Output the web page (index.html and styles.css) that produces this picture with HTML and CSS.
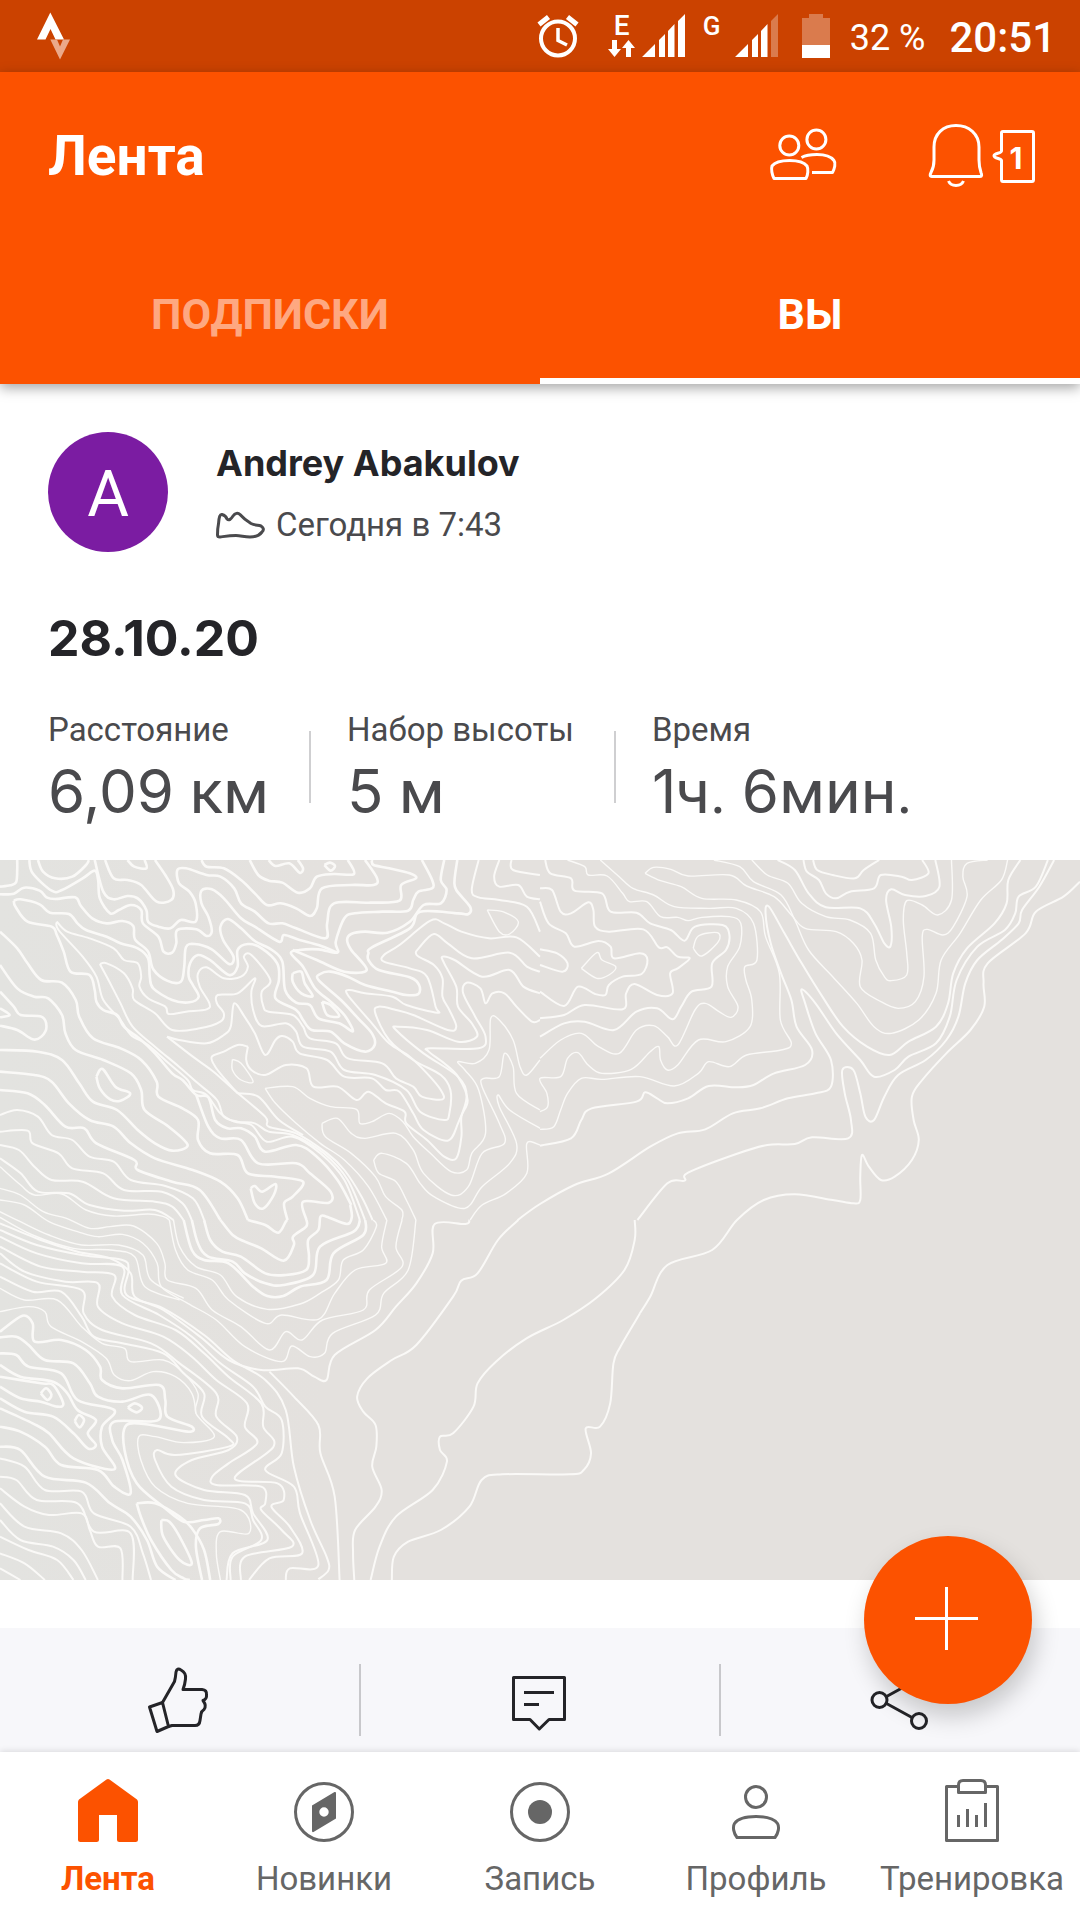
FILE: index.html
```html
<!DOCTYPE html>
<html lang="ru">
<head>
  <meta charset="UTF-8">
  <meta name="viewport" content="width=device-width, initial-scale=1">
  <title>Лента</title>
  <link rel="stylesheet" href="styles.css">
</head>
<body>

  <!-- Status bar -->
  <div class="status-bar">
    <svg class="status-logo" width="36" height="50" viewBox="36 11 36 50">
      <path fill="#fff" d="M50.300 12.500L64 39.500H55.500L50.500 29L45.500 39.500H37Z"/>
      <path fill="#eba98a" d="M50.300 39.500H57L60 46.500L63 39.500H70L60 59.500Z"/>
    </svg>
    <div class="status-icons">
      <svg class="alarm" width="44" height="48" viewBox="536 12 44 48" fill="none" stroke="#fff">
        <circle cx="558" cy="38.500" r="17" stroke-width="4"/>
        <path stroke-width="3.500" d="M558 28V40.500L567 45"/>
        <path stroke-width="5" d="M539 24.500L548.500 17M577 24.500L567.500 17"/>
      </svg>
      <div class="network">
        <div class="net-type">
          <span>E</span>
          <svg width="28" height="18" viewBox="0 0 28 18" fill="#fff">
            <path d="M4 0H9V9H13L6.500 17L0 9H4ZM18 17V8H14L20.500 0L27 8H23V17Z"/>
          </svg>
        </div>
        <svg width="43" height="44" viewBox="0 0 43 44" fill="#fff">
          <path d="M0 43L13 30V43ZM17 43V26L23 20V43ZM26 43V17L32.500 10V43ZM36 43V7L43 0V43Z"/>
        </svg>
      </div>
      <div class="network">
        <div class="net-type"><span>G</span></div>
        <svg width="43" height="44" viewBox="0 0 43 44" fill="#fff">
          <path d="M0 43L13 30V43ZM17 43V26L23 20V43ZM26 43V17L32.500 10V43Z"/>
          <path opacity=".3" d="M36 43V7L43 0V43Z"/>
        </svg>
      </div>
      <svg width="28" height="44" viewBox="0 0 28 44" fill="#fff">
        <path opacity=".3" d="M7 0H21V4H28V31H0V4H7Z"/>
        <path d="M0 31H28V44H0Z"/>
      </svg>
      <span class="battery">32 %</span>
      <span class="clock">20:51</span>
    </div>
  </div>

  <!-- Header -->
  <header class="header">
    <div class="toolbar">
      <h1>Лента</h1>
      <div class="toolbar-actions">
        <button class="icon-btn" aria-label="Друзья">
          <svg width="72" height="60" viewBox="767 126 72 60" fill="none" stroke="#fff" stroke-width="3" stroke-linejoin="round">
            <ellipse cx="789.300" cy="145.500" rx="9.500" ry="9.500"/>
            <ellipse cx="816.400" cy="139.500" rx="9.500" ry="9.500"/>
            <path d="M774 178.500C772 175 771 169 772 166C775 162 782 160.500 789.500 160.500C797 160.500 804 162 807 166C808.500 169 808 175 806 178.500Z"/>
            <path d="M801.500 157.500C806 155 811 154.500 817 154.500C824 154.500 831 156.500 834 160.500C836 163 834.500 169 832.500 172.500H812"/>
          </svg>
        </button>
        <button class="icon-btn" aria-label="Уведомления">
          <svg width="56" height="66" viewBox="928 125 56 66" fill="none" stroke="#fff" stroke-width="3" stroke-linejoin="round">
            <path d="M932 178.500C929.500 178.500 930 176.500 931 174.500C933.500 170 934 167 934 162V149C934 136 943 127.500 956 127.500C969 127.500 979 136 979 149V162C979 167 979.500 170 981 174.500C982 177 982 178.500 980 178.500Z"/>
            <path d="M948.500 183C951 189 961 189 963.500 183"/>
          </svg>
          <span class="badge">
            <svg width="44" height="56" viewBox="992 128 44 56" fill="none" stroke="#fff" stroke-width="3" stroke-linejoin="round">
              <path d="M1001.500 151V133Q1001.500 131.500 1003 131.500H1032Q1033.500 131.500 1033.500 133V179.500Q1033.500 181.500 1032 181.500H1003Q1001.500 181.500 1001.500 179.500V160.500C1001.500 158.500 994 158.500 994 155.700C994 153 1001.500 153.500 1001.500 151Z"/>
            </svg>
            <span class="badge-count">1</span>
          </span>
        </button>
      </div>
    </div>
    <nav class="tabs">
      <a class="tab" href="#following">ПОДПИСКИ</a>
      <a class="tab active" href="#you">ВЫ</a>
    </nav>
  </header>

  <!-- Feed -->
  <main class="feed">
    <article class="activity">
      <div class="athlete">
        <div class="avatar">A</div>
        <div class="athlete-info">
          <h2>Andrey Abakulov</h2>
          <p class="activity-time">
            <svg width="52" height="30" viewBox="2 0 52 30" fill="none" stroke="#4a4a4d" stroke-width="3" stroke-linejoin="round">
              <path d="M3.500 25C3.500 20 4 16 4.600 13C5 7 6 4 8 4.500C10 5 12 6 13 9C15 11 17 9 19 6C21 3 24 2.500 26 4.500C29 8 33 11 37 13.500C41 15.500 44 15 47 16C50 18 50 20 48 22C45 26 41 27 36 27C30 27 27 25.500 22 25.500C15 25.500 10 26.500 6 27Q3.500 27 3.500 25Z"/>
            </svg>
            <span>Сегодня в 7:43</span>
          </p>
        </div>
      </div>
      <h3 class="activity-title">28.10.20</h3>
      <dl class="stats">
        <div class="stat">
          <dt>Расстояние</dt>
          <dd><span class="num">6,09</span> км</dd>
        </div>
        <div class="stat">
          <dt>Набор высоты</dt>
          <dd><span class="num">5</span> м</dd>
        </div>
        <div class="stat">
          <dt>Время</dt>
          <dd><span class="num">1</span>ч. <span class="num">6</span>мин.</dd>
        </div>
      </dl>
      <svg class="map" id="map" viewBox="0 0 1080 720" preserveAspectRatio="xMidYMid slice"></svg>
      <div class="actions">
        <button class="action" aria-label="Нравится">
          <svg width="72" height="72" viewBox="0 0 72 72" fill="none" stroke="#242428" stroke-width="3" stroke-linejoin="round">
            <path d="M6.500 43L19.500 38.500L25.500 62.500L14 67.500Z"/>
            <path d="M19.500 38.500L31.500 17.500Q32.500 14 33 8Q34 3.500 38 6Q43.500 9 42.500 15Q42 20 40 25.500H59Q64 26 63.500 31Q64 35 60 36.500Q64 42 61 45.500Q58.500 47 58 50L57 56.500Q56.500 61.500 52 61.500H29L25.500 62.500"/>
          </svg>
        </button>
        <button class="action" aria-label="Комментарий">
          <svg width="72" height="72" viewBox="0 0 72 72" fill="none" stroke="#242428" stroke-width="3" stroke-linejoin="round">
            <path d="M9.500 13.500H60.500V55.500H45L35.300 65L26 55.500H9.500Z"/>
            <path d="M20 28.500H50M20 40.500H35"/>
          </svg>
        </button>
        <button class="action" aria-label="Поделиться">
          <svg width="72" height="72" viewBox="0 0 72 72" fill="none" stroke="#242428" stroke-width="3">
            <circle cx="14.500" cy="36" r="7.500"/>
            <circle cx="54" cy="57" r="7.500"/>
            <circle cx="54" cy="15" r="7.500"/>
            <path d="M21.500 39.500L47 53.500M21.500 32.500L47 18.500"/>
          </svg>
        </button>
      </div>
    </article>
  </main>

  <button class="fab" aria-label="Добавить">
    <svg width="68" height="68" viewBox="0 0 68 68" stroke="#fff" stroke-width="3">
      <path d="M1 32.500H64M32.500 1V64"/>
    </svg>
  </button>

  <!-- Bottom navigation -->
  <nav class="bottom-nav">
    <a class="nav-item active" href="#feed">
      <svg width="72" height="72" viewBox="0 0 72 72" fill="#fc5200">
        <path d="M34.500 3.500Q36 2.500 37.500 3.500L65 23.500Q66 24.500 66 26V63.500Q66 66 63.500 66H47.500Q45 66 45 63.500V39H27V63.500Q27 66 24.500 66H8.500Q6 66 6 63.500V26Q6 24.500 7 23.500Z"/>
      </svg>
      <span>Лента</span>
    </a>
    <a class="nav-item" href="#explore">
      <svg width="72" height="72" viewBox="0 0 72 72">
        <circle cx="36" cy="36" r="28.500" fill="none" stroke="#666" stroke-width="3"/>
        <path fill="#666" fill-rule="evenodd" d="M46.500 16Q48 15.500 48 17V42.500L25.500 56Q24 56.500 24 55V29.500ZM36 31.300A4.700 4.700 0 1 0 36 40.700A4.700 4.700 0 1 0 36 31.300Z"/>
      </svg>
      <span>Новинки</span>
    </a>
    <a class="nav-item" href="#record">
      <svg width="72" height="72" viewBox="0 0 72 72">
        <circle cx="36" cy="36" r="28.500" fill="none" stroke="#666" stroke-width="3"/>
        <circle cx="36" cy="36" r="12" fill="#666"/>
      </svg>
      <span>Запись</span>
    </a>
    <a class="nav-item" href="#profile">
      <svg width="72" height="72" viewBox="0 0 72 72" fill="none" stroke="#666" stroke-width="3" stroke-linejoin="round">
        <circle cx="36" cy="21" r="10.500"/>
        <path d="M17 61.500C13.500 57 12.500 51 14.500 47.500C18 42.500 27 40.500 36 40.500C45 40.500 54 42.500 57.500 47.500C59.500 51 58.500 57 55 61.500Z"/>
      </svg>
      <span>Профиль</span>
    </a>
    <a class="nav-item" href="#training">
      <svg width="72" height="72" viewBox="0 0 72 72" fill="none" stroke="#666" stroke-width="3" stroke-linejoin="round">
        <path d="M22.500 10.500H10.500V64.500H61.500V10.500H49.500"/>
        <path d="M22.500 16.500V9Q22.500 4.500 27 4.500H45Q49.500 4.500 49.500 9V16.500Z"/>
        <path d="M22.500 51V39M31.500 51V33M40.500 51V39M49.500 51V27"/>
      </svg>
      <span>Тренировка</span>
    </a>
  </nav>

  <script src="map.js"></script>
</body>
</html>
```
FILE: styles.css
```css
* {
  box-sizing: border-box;
}

body {
  margin: 0;
  height: 100vh;
  display: flex;
  flex-direction: column;
  background: #fff;
  color: #242428;
  font-family: Roboto, sans-serif;
}

svg {
  display: block;
  flex-shrink: 0;
}

h1, h2, h3, p, dl, dd {
  margin: 0;
}

a {
  text-decoration: none;
}

button {
  border: none;
  padding: 0;
  background: none;
  font-family: inherit;
  cursor: pointer;
}

/* Status bar */
.status-bar {
  display: flex;
  justify-content: space-between;
  align-items: center;
  flex-shrink: 0;
  height: 72px;
  padding: 0 24px 0 36px;
  background: #cb4200;
  color: #fff;
}

.status-icons {
  display: flex;
  align-items: center;
  gap: 24px;
}

.alarm {
  margin-right: 4px;
}

.network {
  display: flex;
  gap: 6px;
  height: 44px;
}

.network + .network {
  margin-left: -6px;
}

.net-type {
  display: flex;
  flex-direction: column;
  align-items: center;
  justify-content: space-between;
  min-width: 18px;
  font-size: 28px;
  font-weight: 500;
  line-height: 24px;
}

.network + .network .net-type {
  font-size: 26px;
  margin-right: 8px;
}

.battery,
.clock {
  padding-top: 4px;
  line-height: 44px;
}

.battery {
  margin-left: -4px;
  font-size: 36px;
}

.clock {
  font-size: 42px;
  font-weight: 500;
}

/* Header */
.header {
  position: relative;
  z-index: 1;
  flex-shrink: 0;
  background: #fc5200;
  box-shadow: 0 4px 12px rgba(0, 0, 0, 0.35);
}

.toolbar {
  display: flex;
  align-items: center;
  justify-content: space-between;
  height: 168px;
  padding: 0 44px 0 48px;
}

.toolbar h1 {
  color: #fff;
  font-size: 55px;
  font-weight: 700;
}

.toolbar-actions {
  display: flex;
  align-items: center;
  gap: 89px;
}

.icon-btn {
  display: flex;
  align-items: center;
  gap: 8px;
}

.badge {
  position: relative;
}

.badge-count {
  position: absolute;
  inset: 0 0 0 4px;
  color: #fff;
  font-family: Inter, sans-serif;
  font-size: 30px;
  font-weight: 700;
  line-height: 60px;
  text-align: center;
}

.tabs {
  display: flex;
}

.tab {
  flex: 1;
  height: 144px;
  border-bottom: 6px solid transparent;
  color: #fea881;
  font-size: 43px;
  font-weight: 700;
  line-height: 148px;
  text-align: center;
}

.tab.active {
  border-color: #fff;
  color: #fff;
}

/* Feed */
.feed {
  flex: 1;
  min-height: 0;
  overflow: hidden;
}

.athlete {
  display: flex;
  gap: 48px;
  padding: 48px 48px 0;
}

.avatar {
  width: 120px;
  height: 120px;
  border-radius: 50%;
  background: #7b1ca2;
  color: #fff;
  font-size: 64px;
  line-height: 126px;
  text-align: center;
}

.athlete-info {
  padding-top: 7px;
}

.athlete-info h2 {
  font-family: Inter, sans-serif;
  font-size: 36px;
  font-weight: 700;
  line-height: 48px;
}

.activity-time {
  display: flex;
  align-items: center;
  gap: 8px;
  margin-top: 14px;
  color: #4a4a4d;
  font-size: 33px;
  line-height: 48px;
}

.activity-title {
  padding: 56px 48px 0;
  font-family: Inter, sans-serif;
  font-size: 50px;
  font-weight: 700;
  line-height: 60px;
}

.stats {
  display: flex;
  padding: 40px 48px 28px;
  color: #4a4a4d;
}

.stat {
  position: relative;
}

.stat + .stat {
  margin-left: 78px;
}

.stat + .stat::before {
  content: "";
  position: absolute;
  left: -38px;
  top: 23px;
  width: 2px;
  height: 72px;
  background: #cfcfd1;
}

.stat dt {
  font-size: 33px;
  line-height: 44px;
}

.stat dd {
  font-size: 62px;
  line-height: 80px;
  white-space: nowrap;
}

.num {
  font-family: Inter, sans-serif;
  font-size: 60px;
  line-height: 60px;
}

.map {
  width: 100%;
  height: 720px;
  background: linear-gradient(90deg, #e3e3e0, #e4e1de 30%);
}

.map path {
  fill: none;
  stroke: #faf9f7;
  stroke-linejoin: round;
}

.actions {
  display: flex;
  align-items: center;
  height: 144px;
  margin-top: 48px;
  background: #f7f7fa;
}

.action {
  display: flex;
  flex: 1;
  align-items: center;
  justify-content: center;
  height: 72px;
}

.action + .action {
  border-left: 2px solid #c8c8cb;
}

.fab {
  position: fixed;
  right: 48px;
  bottom: 216px;
  z-index: 2;
  display: flex;
  align-items: center;
  justify-content: center;
  width: 168px;
  height: 168px;
  border-radius: 50%;
  background: #fc5200;
  box-shadow: 4px 12px 24px rgba(0, 0, 0, 0.2);
}

/* Bottom navigation */
.bottom-nav {
  position: relative;
  z-index: 1;
  display: grid;
  grid-template-columns: repeat(5, 1fr);
  flex-shrink: 0;
  height: 168px;
  padding-top: 24px;
  background: #fff;
  box-shadow: 0 -1px 6px rgba(0, 0, 0, 0.12);
}

.nav-item {
  display: flex;
  flex-direction: column;
  align-items: center;
  gap: 11px;
  color: #666;
  font-size: 33px;
  line-height: 40px;
}

.nav-item.active {
  color: #fc5200;
  font-weight: 700;
}
```
FILE: map.js
```js
// Contour lines, grouped in tiles. x, y: tile origin on the map, sx, sy: units per map pixel
const tiles = [
  {
    x: 0, y: 0, sx: 2.904, sy: 3, width: 2.6,
    lines: [
      '0,80 30,76 47,66 50,30 50,0',
      '0,103 40,101 70,83 115,92 135,112 160,117 218,112 235,138 268,175 310,190 355,183 387,198 392,238 430,275 445,328 485,362 525,365 535,320 540,262 565,252 615,268 665,312 678,290 648,240 640,200 662,177 700,205 740,243 790,270 820,305 828,390 860,428 900,435 925,475 985,490 1025,514 1000,465 960,425 915,385 880,320 845,280 870,270 925,268 980,278 975,245 1000,175 1030,160 1110,155 1185,152 1200,120 1215,95 1255,85 1255,60 1225,0',
      '85,0 95,40 150,92 180,90 240,55 275,32 285,60 290,115 320,160 345,150 380,135 410,150 415,190 460,230 475,275 500,278 512,250 515,210 570,208 600,228 615,215 605,170 585,130 585,92 615,88 650,115 700,175 740,200 810,245 825,225 870,240 925,255 980,278',
      '275,0 300,95 330,118 370,108 400,115 425,150 430,185 460,200 495,205 525,180 568,185 568,130 550,95 520,70 515,30 540,25 600,45 640,50 680,85 700,130 740,155 780,190 820,190 860,205 945,235 950,190 970,130 1075,128 1160,122 1165,75 1208,55 1190,40 1130,25 1085,15 1080,0',
      '305,0 330,55 370,60 410,75 455,125 497,120 503,90 480,45 450,0',
      '370,0 390,20 425,25 420,0',
      '585,0 600,20 650,25 700,60 740,100 775,135 815,130 860,145 900,168 920,145 935,85 1020,75 1085,75 1095,55 1060,0',
      '725,0 750,45 780,62 820,68 865,98 900,85 920,50 970,42 1028,42 1010,0',
      '780,0 800,18 840,10 870,38 880,25 865,0',
      '942,15 958,8 973,18 960,32 942,15',
      '110,0 125,35 160,55 210,50 250,15 258,0',
      '40,122 60,118 115,133 145,158 200,162 225,190 250,210 310,230 350,250 400,265 430,295 435,350 445,385 500,420 550,427 577,410 560,375 548,350 552,310 575,285 610,300 665,345 690,320 690,270 720,252 760,265 805,310 810,360 800,415 860,450 880,480 905,510 960,515 1000,550 1060,575 1088,555 1080,520 1040,475 990,420 925,360 930,342 960,335 1010,350 1060,375 1140,395 1180,405 1215,402 1217,375 1190,352 1100,330 1070,300 1070,280 1080,262 1190,205 1220,155 1330,160 1360,162 1365,140 1325,90 1320,60 1328,0',
      '1290,0 1280,60 1297,90 1280,130 1230,135 1190,185 1125,218 1060,215 1020,222 1008,240 1020,270 1065,330 1000,335 920,300 850,270',
      '40,122 45,140 80,185 150,200 165,225 185,275 205,335 260,345 275,390 280,425 300,450 340,465 360,500 410,540 450,580 500,640 530,660 570,705 605,712 625,780 660,805 700,805 740,830 770,875 860,855 920,890 980,960 1020,1035',
      '0,215 50,265 80,310 120,360 180,368 220,420 230,470 270,535 350,565 410,600 455,665 460,710 530,745 575,780 575,840 610,880 690,885 720,940 800,950 880,965 850,1010 825,1030 835,1080',
      '0,315 50,385 100,410 140,415 180,465 190,520 220,570 300,600 380,640 410,690 420,750 490,800 545,855 500,872 450,850 400,810 340,750 270,725 230,670 180,600 110,575 0,570',
      '280,650 298,627 335,680 378,700 350,722 320,718 290,685 280,650',
      '0,395 40,440 60,465 120,470 135,500 120,530 95,538 50,510 0,497',
      '0,445 28,465 0,472',
      '0,635 100,645 150,665 200,730 260,780 330,800 380,850 450,895 560,930 640,965 690,1015 720,1080',
      '0,690 80,700 130,735 190,800 245,805 280,850 390,900 400,930 500,965 580,990 640,1080',
      '728,985 740,978 762,995 800,972 795,1005 765,1045 740,1030 728,985',
      '570,705 605,800 640,835 700,840 750,910 860,910 900,940 960,995 955,1028 880,1025 890,1080',
      '850,340 875,335 885,370 908,408 875,400 850,365 850,340',
      '935,425 960,435 985,468 950,465 935,425'
    ]
  },
  {
    x: 0, y: 0, sx: 2.904, sy: 3, width: 2,
    lines: [
      '165,185 170,210 240,290 280,350 300,420 350,480 380,525 430,555 490,610 545,660 560,690 600,705 640,760 680,785 730,795 775,845 850,830 930,880 1000,960 1045,1080',
      '165,185 195,215 260,235 330,265 360,300 400,310 410,350 405,380 430,415 480,440 490,462 540,455 600,448 608,430 580,380 575,340 600,322 650,355 700,350 720,320 708,290 730,285 785,360 760,395 765,440 780,455 850,465 880,500 900,535 975,550 1010,595 1110,610 1150,655 1200,680 1225,710 1285,718 1280,690 1240,640 1190,590 1130,550 1080,490 1010,405 1015,390 1060,400 1140,410 1180,435 1270,458 1265,440 1240,350 1190,325 1115,305 1115,285 1160,255 1250,182 1290,190 1340,215 1420,235 1500,232 1568,290',
      '290,312 310,310 360,340 385,385 390,420 450,460 500,510 580,505 640,485 650,460 630,430 632,405 690,400 740,355 730,395 735,450 760,498 830,490 860,515 880,560 960,575 1000,630 1090,645 1180,690 1220,755 1290,780 1305,760 1308,690 1280,645 1200,600 1130,540 1090,460 1100,440 1150,450 1200,465 1300,510 1325,500 1305,450 1285,410 1285,355 1260,315 1210,285 1220,260 1260,222 1300,250 1370,295 1480,278 1530,320 1568,335',
      '290,312 320,370 350,430 385,500 450,560 520,620 575,670 630,720 650,770 690,785 740,790 780,815 850,825 940,880 1010,960 1060,1080',
      '485,530 520,540 600,550 650,525 670,500 680,430 710,470 740,520 770,585 800,540 820,528 850,545 870,580 950,600 1000,650 1080,655 1120,690 1160,695 1200,760 1230,810 1300,842 1330,790 1355,710 1330,650 1230,580 1150,510 1155,500 1240,510 1330,545 1385,530 1370,490 1330,440 1325,380 1290,310 1285,290 1320,300 1400,350 1480,330 1520,380 1568,400',
      '485,530 560,590 620,635 680,690 770,770 780,800 860,820 950,880 1000,930 1050,1010 1082,1080',
      '690,700 750,710 810,780 880,825',
      '720,560 690,555 650,575 615,590 625,620 660,665 690,700',
      '720,560 715,600 730,630 770,645 830,615 890,625 910,680 980,680 1035,720 1070,695 1120,730 1175,755 1180,790 1240,840 1290,890 1325,895 1340,830 1340,770 1358,720 1330,650 1290,610 1245,575 1250,565 1390,565 1410,530 1380,470 1345,400 1355,368 1395,385 1410,430 1430,400 1465,400 1500,440 1545,485 1568,480',
      '1390,0 1370,90 1390,112 1450,120 1530,140 1568,215',
      '1450,0 1435,50 1450,80 1505,75 1530,110 1568,118',
      '1485,0 1490,30 1568,45',
      '0,765 50,750 110,770 150,825 210,840 260,890 330,905 380,960 480,978 560,1015 593,1080',
      '0,815 80,812 95,850 170,880 210,925 300,940 360,990 470,995 530,1030 557,1080',
      '0,855 55,870 100,920 150,960 240,965 330,1015 450,1025 500,1040 533,1080',
      '0,895 60,940 110,995 200,1000 260,1035 360,1052 450,1050 504,1080'
    ]
  },
  {
    x: 0, y: 0, sx: 2.904, sy: 3, width: 1.4,
    lines: [
      '1415,150 1460,155 1505,185 1480,222 1450,215 1415,150',
      '675,598 700,610 735,665 700,660 675,630 675,598',
      '770,685 850,680 900,715 960,740 1035,748 1045,790 1080,785 1130,760 1170,785 1200,830 1250,880 1310,935 1355,930 1370,880 1410,820 1390,690 1350,630 1330,605 1380,610 1420,570 1425,475 1450,480 1490,540 1510,620 1530,645 1568,600',
      '770,685 800,730 860,790 930,850 1000,900 1070,980 1123,1080',
      '935,790 980,775 1020,820 1060,835 1150,820 1200,870 1230,940 1310,1005 1360,980 1400,880 1465,850 1450,790 1400,680 1405,655 1450,650 1465,580 1490,620 1500,700 1568,750',
      '935,790 945,830 1020,880 1090,950 1120,1010 1167,1050 1167,1080',
      '1085,900 1110,880 1180,910 1220,970 1260,1010 1350,1045 1400,980 1480,910 1500,850 1450,740 1447,705 1480,750 1568,805',
      '1085,900 1100,940 1150,965 1180,1020 1208,1080',
      '1365,1080 1400,1035 1470,1000 1530,940 1530,850 1568,855',
      '0,920 60,975 100,1005 180,1002 250,1050 330,1068 430,1062 475,1070 492,1080'
    ]
  },
  {
    x: 540, y: 0, sx: 2.904, sy: 3, width: 2,
    lines: [
      '15,0 30,40 90,55 100,92 180,100 205,155 280,158 320,190 380,210 420,242 450,200 530,195 550,225 540,270 500,310 498,380 440,395 410,440 385,478 340,445 280,455 215,510 130,485 70,490 0,530',
      '0,85 35,90 60,155 90,160 140,127 155,150 160,200 200,215 300,208 345,262 370,262 400,290 435,295 400,325 378,340 385,400 340,405 275,372 250,400 240,448 130,435 70,465 0,475',
      '0,125 25,190 75,220 100,260 170,243 205,260 215,295 290,280 312,300 295,342 240,350 200,375 190,405 160,402 110,380 70,438 0,395',
      '0,268 50,280 80,310 65,335 0,315',
      '690,0 740,30 780,100 830,142 930,145 970,190 1000,250 1018,258 1020,200 1005,120 1020,88 1060,105 1120,108 1160,80 1148,0',
      '765,0 775,35 810,60 830,100 860,115 900,95 970,85 990,45 1050,50 1080,60 1128,40 1110,0',
      '793,0 805,30 850,45 915,55 940,30 985,0',
      '1395,0 1360,60 1355,130 1320,190 1240,265 1200,340 1185,430 1150,500 1070,545 1015,585 950,560 880,500 820,410 760,310 710,220 665,140 655,160 670,250 700,340 730,420 745,500 790,570 770,615 680,640 620,675 570,682 490,678 430,715 370,730 340,715 305,697 280,725 150,745 120,780 90,835 0,857',
      '1475,0 1440,80 1390,110 1380,160 1350,210 1270,260 1210,360 1190,470 1150,550 1070,590 1030,630 970,650 930,600 860,520 800,430 760,388 770,430 800,520 845,600 845,680 800,700 720,715 640,745 560,760 480,808 400,820 320,860 200,940 100,975 0,1032 -65,1080',
      '1493,0 1450,80 1400,150 1390,190 1340,240 1270,300 1235,370 1215,470 1180,540 1120,600 1040,645 1000,710 970,780 945,770 930,700 910,630 878,630 885,700 903,780 895,835 790,832 740,852 660,855 570,882 430,938 420,962 370,970 283,1080',
      '1568,65 1520,110 1440,155 1410,220 1300,310 1288,370 1290,440 1250,510 1180,580 1110,660 1080,710 1085,780 1100,840 1080,900 1030,950 990,960 955,920 935,885 930,950 930,1020 910,1030 850,1020 740,1003 650,1020 572,1080 500,1170 370,1215 320,1310 290,1360'
    ]
  },
  {
    x: 540, y: 0, sx: 2.904, sy: 3, width: 1.4,
    lines: [
      '80,0 130,20 140,45 195,48 240,100 260,125 310,125 350,170 400,172 430,182 470,172 550,170 583,190 580,260 545,320 545,380 575,440 555,472 520,455 480,430 450,450 400,555 370,530 330,497 280,510 230,580 170,560 120,520 60,540 0,595',
      '175,0 230,50 270,85 330,105 390,140 490,145 570,145 620,190 630,300 595,320 598,360 615,420 610,500 540,545 460,540 400,615 370,630 350,600 345,560 320,575 265,628 180,640 140,615 110,578 80,595 60,650 0,655 20,700 22,740 0,755',
      '120,325 165,278 180,300 220,320 200,345 165,355 120,325',
      '445,265 460,228 515,218 518,245 470,288 445,265',
      '305,40 330,22 380,28 430,48 550,45 600,78 680,110 730,165 770,205 860,215 910,250 935,300 930,380 990,425 1040,445 1090,425 1115,350 1110,230 1125,208 1170,225 1200,200 1240,110 1228,50 1240,10 1300,0',
      '305,40 350,62 410,80 470,115 570,120 640,155 655,230 695,340 698,480 730,550 700,570 600,585 550,620 490,605 460,640 390,678 290,650 180,658 120,655 80,700 60,750 40,800 0,808',
      '505,0 580,20 620,65 700,105 740,180 780,270 850,350 920,430 970,500 1020,520 1100,480 1150,400 1165,300 1220,220 1280,120 1340,60 1358,0',
      '615,0 660,45 720,70 760,130 830,170 900,180 960,220 975,300 1000,350 1020,362 1065,345 1065,280 1055,180 1065,122 1110,135 1155,165 1195,120 1195,0'
    ]
  },
  {
    x: 0, y: 360, sx: 2.45, sy: 3, width: 2,
    lines: [
      '1270,0 1220,60 1170,160 1130,182 1110,230 1020,375 960,420 900,475 875,530 890,575 920,615 922,680 912,740 935,810 920,860 870,930 865,1000 868,1080',
      '1555,0 1555,60 1530,150 1460,235 1380,300 1290,355 1215,425 1170,490 1160,560 1110,640 1078,650 1078,690 1095,725 1060,810 970,890 930,980 908,1080',
      '1568,280 1520,380 1503,430 1495,550 1470,620 1435,625 1448,700 1430,750 1395,763 1230,763 1180,780 1150,860 1080,930 1000,965 965,1010 960,1080',
      '1150,0 1140,12 1065,12 1060,100 1020,190 970,260 920,330 820,405 800,480 770,470 730,445 640,450 560,420 490,350 400,270 330,230 320,160 270,115 190,95 100,60 0,10',
      '660,455 720,530 780,615 785,700 820,830 832,1080',
      '0,30 90,75 200,105 300,120 315,150 310,225 400,265 500,345 570,420 650,480 700,570 720,740 760,900 800,1010 805,1050 780,1078',
      '0,50 90,100 200,130 300,140 300,225 390,285 470,350 540,430 620,500 650,560 690,600 690,700 650,750 720,800 735,880 780,1035 710,1045 700,1080',
      '0,80 100,140 200,155 280,165 275,230 330,285 430,330 500,400 560,470 640,550 645,620 670,680 575,775 680,790 695,840 665,860 710,920 740,1000 660,1015 610,1080',
      '0,100 60,155 160,185 240,190 240,260 300,310 400,350 470,410 530,480 605,550 600,620 630,670 560,730 520,770 530,795 640,800 650,850 640,870 690,930 715,980 600,1010 590,1080',
      '0,130 90,185 200,210 205,280 250,330 370,370 440,430 530,520 530,590 580,650 560,690 470,720 430,765 500,810 600,825 620,880 655,960 570,1000 555,1080',
      '0,170 80,215 150,215 200,290 230,350 300,370 400,400 450,460 500,520 495,590 560,655 560,680 430,705 385,690 380,720 420,800 500,840 600,850 620,900 640,960 570,1010 565,1080'
    ]
  },
  {
    x: 0, y: 360, sx: 2.45, sy: 3, width: 2.6,
    lines: [
      '607,0 650,15 682,38 700,5 704,0',
      '540,0 570,45 600,65 640,85 695,122 720,75 718,50 750,20 751,0',
      '500,0 515,60 545,95 590,110 650,160 700,165 750,150 757,110 755,60 780,30 785,-10 800,-10 850,12 862,-10 858,-45',
      '470,0 485,70 510,110 570,125 600,160 650,190 694,195 767,165 784,80 866,35 882,0',
      '450,0 470,90 500,120 560,130 620,200 655,228 694,228 735,200 800,180 817,100 890,45 895,0',
      '0,335 55,287 80,310 85,365 150,360 210,390 245,440 250,480 300,505 390,495 405,540 410,590 470,620 460,635 370,615 310,615 305,690 335,790 400,860 450,905 500,900 535,895 535,912 490,925 480,980 495,1080',
      '0,352 40,350 70,375 110,420 180,430 220,490 240,530 300,545 370,525 388,600 280,605 275,660 300,720 320,820 280,800 240,750 150,735 110,680 50,635 0,620',
      '0,400 40,405 70,440 150,460 190,540 280,570 250,620 250,680 280,748 180,715 120,640 80,610 0,565',
      '0,435 50,470 130,485 165,520 190,570 235,600 215,640 235,675 215,685 180,640 130,590 60,575 0,535',
      '0,470 100,490 130,495 155,550 140,560 100,545 50,535 0,500',
      '100,520 113,505 126,524 116,540 100,520',
      '313,563 330,550 348,563 335,577 313,563',
      '183,603 193,585 206,600 195,622 183,603',
      '335,850 380,850 440,890 470,925 500,990 515,1080',
      '335,850 345,890 370,960 420,1050 450,1075 465,1080',
      '395,900 415,905 440,950 470,1030 440,1020 400,950 395,900',
      '0,680 50,690 110,770 210,788 270,850 320,890 360,960 385,1040 430,1080'
    ]
  },
  {
    x: 0, y: 360, sx: 2.45, sy: 3, width: 1.4,
    lines: [
      '425,0 440,80 480,140 540,165 580,230 655,268 735,252 784,220 829,180 841,120 890,90 922,20 914,0',
      '415,0 430,90 460,150 520,180 560,240 650,310 690,285 780,298 820,220 870,150 945,130 935,80 948,0',
      '0,-95 50,-75 106,-25 163,-5 220,25 270,20 327,18 384,70 404,130 410,180 480,205 520,270 590,320 660,390 700,335 740,360 790,300 890,270 905,210 985,140 970,80 985,0',
      '0,-60 60,-45 120,5 190,35 240,50 300,43 350,70 385,130 395,200 460,250 530,300 600,380 690,425 715,378 760,410 795,400 815,340 920,285 940,220 1000,150 1019,0',
      '0,205 60,240 140,240 200,320 250,370 305,385 320,425 400,420 450,460 485,520 480,580 525,650 450,668 380,650 340,650 345,720 380,800 460,850 590,870 610,940 540,935 530,1000 540,1080',
      '0,275 70,260 110,275 125,320 200,365 260,415 280,465 320,482 375,455 430,470 470,520 480,580',
      '0,-25 50,5 120,45 200,75 290,75 350,105 370,180 450,235',
      '0,-8 80,45 180,85 270,90 330,110 355,200 440,240'
    ]
  },
  {
    x: 0, y: 360, sx: 2.45, sy: 3, width: 2,
    lines: [
      '0,715 60,740 110,810 200,815 230,880 320,920 350,1000 370,1080',
      '0,770 40,780 90,840 190,850 230,935 320,940 325,1080',
      '0,805 60,860 120,885 200,880 220,930 240,980 295,985 300,1080',
      '0,850 60,920 150,940 200,990 240,1080',
      '0,900 50,960 130,980 180,1020 210,1080',
      '0,950 70,990 140,1020 180,1080',
      '0,1000 60,1030 110,1080',
      '0,1045 50,1080'
    ]
  }
];

// Smooth curve through all the points
function smooth(points) {
  let d = `M${points[0].join(' ')}`;
  for (let i = 0; i < points.length - 1; i++) {
    const p0 = points[i - 1] || points[i];
    const p1 = points[i];
    const p2 = points[i + 1];
    const p3 = points[i + 2] || p2;
    d += `C${p1[0] + (p2[0] - p0[0]) / 6} ${p1[1] + (p2[1] - p0[1]) / 6}`;
    d += ` ${p2[0] - (p3[0] - p1[0]) / 6} ${p2[1] - (p3[1] - p1[1]) / 6}`;
    d += ` ${p2[0]} ${p2[1]}`;
  }
  return d;
}

const map = document.getElementById('map');

tiles.forEach(tile => {
  tile.lines.forEach(line => {
    const points = line.split(' ').map(pair => {
      const [x, y] = pair.split(',').map(Number);
      return [tile.x + x / tile.sx, tile.y + y / tile.sy];
    });
    const path = document.createElementNS('http://www.w3.org/2000/svg', 'path');
    path.setAttribute('d', smooth(points));
    path.setAttribute('stroke-width', tile.width);
    map.appendChild(path);
  });
});
```
